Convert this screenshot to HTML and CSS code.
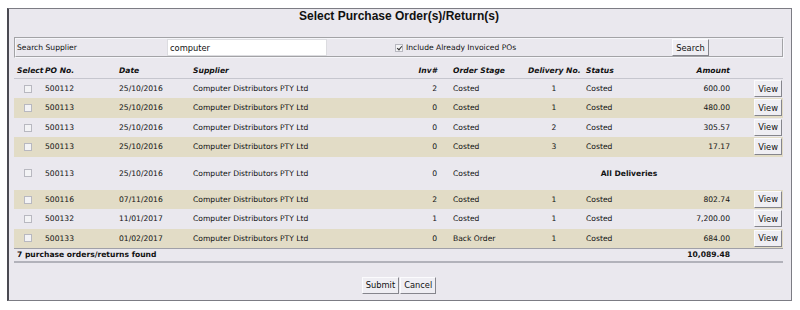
FILE: index.html
```html
<!DOCTYPE html>
<html>
<head>
  <title>Select Purchase Order(s)/Return(s)</title>
  <meta charset="UTF-8">
  <link rel="stylesheet" href="styles.css">
</head>
<body>
  <div class="frame">
    <h1 class="title">Select Purchase Order(s)/Return(s)</h1>

    <!-- Pasek wyszukiwania dostawcy -->
    <form class="search-bar" id="search-form">
      <label class="search-label" for="supplier">Search Supplier</label>
      <div><input type="text" id="supplier" class="search-input" value="computer"></div>
      <label class="include"><input type="checkbox" class="check" checked> Include Already Invoiced POs</label>
      <button type="submit" class="btn">Search</button>
    </form>

    <table class="po-table">
      <colgroup>
        <col class="c-select">
        <col class="c-po">
        <col class="c-date">
        <col class="c-supplier">
        <col class="c-inv">
        <col class="c-stage">
        <col class="c-delivery">
        <col class="c-status">
        <col class="c-amount">
        <col class="c-view">
      </colgroup>
      <thead>
        <tr>
          <th>Select</th>
          <th>PO No.</th>
          <th>Date</th>
          <th>Supplier</th>
          <th class="num inv">Inv#</th>
          <th>Order Stage</th>
          <th>Delivery No.</th>
          <th>Status</th>
          <th class="num">Amount</th>
          <th></th>
        </tr>
      </thead>
      <tbody>
        <tr>
          <td class="center"><input type="checkbox" class="check"></td>
          <td>500112</td><td>25/10/2016</td><td>Computer Distributors PTY Ltd</td>
          <td class="num inv">2</td><td>Costed</td><td class="center">1</td><td>Costed</td>
          <td class="num">600.00</td><td class="view"><button class="btn">View</button></td>
        </tr>
        <tr>
          <td class="center"><input type="checkbox" class="check"></td>
          <td>500113</td><td>25/10/2016</td><td>Computer Distributors PTY Ltd</td>
          <td class="num inv">0</td><td>Costed</td><td class="center">1</td><td>Costed</td>
          <td class="num">480.00</td><td class="view"><button class="btn">View</button></td>
        </tr>
        <tr>
          <td class="center"><input type="checkbox" class="check"></td>
          <td>500113</td><td>25/10/2016</td><td>Computer Distributors PTY Ltd</td>
          <td class="num inv">0</td><td>Costed</td><td class="center">2</td><td>Costed</td>
          <td class="num">305.57</td><td class="view"><button class="btn">View</button></td>
        </tr>
        <tr>
          <td class="center"><input type="checkbox" class="check"></td>
          <td>500113</td><td>25/10/2016</td><td>Computer Distributors PTY Ltd</td>
          <td class="num inv">0</td><td>Costed</td><td class="center">3</td><td>Costed</td>
          <td class="num">17.17</td><td class="view"><button class="btn">View</button></td>
        </tr>
        <tr class="tall">
          <td class="center"><input type="checkbox" class="check"></td>
          <td>500113</td><td>25/10/2016</td><td>Computer Distributors PTY Ltd</td>
          <td class="num inv">0</td><td>Costed</td>
          <td colspan="3" class="center all">All Deliveries</td>
          <td></td>
        </tr>
        <tr>
          <td class="center"><input type="checkbox" class="check"></td>
          <td>500116</td><td>07/11/2016</td><td>Computer Distributors PTY Ltd</td>
          <td class="num inv">2</td><td>Costed</td><td class="center">1</td><td>Costed</td>
          <td class="num">802.74</td><td class="view"><button class="btn">View</button></td>
        </tr>
        <tr>
          <td class="center"><input type="checkbox" class="check"></td>
          <td>500132</td><td>11/01/2017</td><td>Computer Distributors PTY Ltd</td>
          <td class="num inv">1</td><td>Costed</td><td class="center">1</td><td>Costed</td>
          <td class="num">7,200.00</td><td class="view"><button class="btn">View</button></td>
        </tr>
        <tr>
          <td class="center"><input type="checkbox" class="check"></td>
          <td>500133</td><td>01/02/2017</td><td>Computer Distributors PTY Ltd</td>
          <td class="num inv">0</td><td>Back Order</td><td class="center">1</td><td>Costed</td>
          <td class="num">684.00</td><td class="view"><button class="btn">View</button></td>
        </tr>
      </tbody>
      <tfoot>
        <tr>
          <td colspan="8">7 purchase orders/returns found</td>
          <td class="num">10,089.48</td>
          <td></td>
        </tr>
      </tfoot>
    </table>

    <div class="actions">
      <button class="btn" id="submit-button">Submit</button>
      <button class="btn" id="cancel-button">Cancel</button>
    </div>
  </div>
</body>
</html>
```

FILE: styles.css
```css
body {
  margin: 0;
  background-color: #fff;
  font-family: "DejaVu Sans", Verdana, sans-serif;
  font-size: 7.6px;
  color: #111;
}

/* Ramka całego okna */
.frame {
  margin: 8px 8px 0 7px;
  height: 293px;
  box-sizing: border-box;
  padding: 0 7px 0 5px;
  background-color: #eae8ee;
  border: 1px solid #7c7c84;
  border-left: 2px solid #4a4a52;
}

.title {
  margin: 0;
  height: 28px;
  line-height: 26px;
  text-align: center;
  font: bold 12px "Liberation Sans", Arial, sans-serif;
}

/* Pasek wyszukiwania */
.search-bar {
  display: grid;
  grid-template-columns: 151px 228px 277px 37px;
  align-items: center;
  height: 21px;
  box-sizing: border-box;
  margin: 0;
  border: 2px groove #f6f6fa;
}

.search-label {
  padding-left: 1px;
}

.search-input {
  display: block;
  width: 160px;
  height: 17px;
  box-sizing: border-box;
  padding: 0 2px;
  border: 1px solid #dcdce0;
  background: #fff;
  font-family: inherit;
  font-size: 8.3px;
  color: #111;
  outline: none;
}

.include {
  display: flex;
  align-items: center;
  gap: 3px;
}

/* Małe pola wyboru */
.check {
  appearance: none;
  -webkit-appearance: none;
  position: relative;
  width: 8px;
  height: 8px;
  margin: 0;
  border: 1px solid #b8b8c0;
  background-color: #f3f3f5;
  vertical-align: middle;
}

.check:checked::before {
  content: "";
  position: absolute;
  left: 2px;
  top: 0;
  width: 2px;
  height: 4px;
  border: solid #333;
  border-width: 0 1px 1px 0;
  transform: rotate(40deg);
}

/* Przyciski */
.btn {
  height: 17px;
  padding: 0 3px;
  background-color: #efeef3;
  border: 1px solid;
  border-color: #fbfbfd #85858c #85858c #fbfbfd;
  font-family: inherit;
  font-size: 8.3px;
  color: #111;
  cursor: pointer;
}

/* Tabela zamówień */
.po-table {
  width: 769px;
  margin-top: 4px;
  border-collapse: collapse;
  table-layout: fixed;
}

.c-select { width: 28px; }
.c-po { width: 74px; }
.c-date { width: 74px; }
.c-supplier { width: 220px; }
.c-inv { width: 40px; }
.c-stage { width: 75px; }
.c-delivery { width: 58px; }
.c-status { width: 67px; }
.c-amount { width: 83px; }
.c-view { width: 50px; }

.po-table th {
  height: 16px;
  padding: 0 3px;
  text-align: left;
  font-weight: bold;
  font-style: italic;
  white-space: nowrap;
  border-bottom: 1px solid #c6c6ce;
}

.po-table td {
  padding: 0 3px;
  white-space: nowrap;
}

.po-table tbody tr {
  height: 19.5px;
}

.po-table tbody tr:nth-child(even) {
  background-color: #e2dcc6;
}

.po-table tbody tr.tall {
  height: 33px;
}

.po-table .num {
  text-align: right;
}

.po-table .inv {
  padding-right: 13px;
}

.po-table .center {
  text-align: center;
}

.po-table .all {
  font-weight: bold;
}

.po-table .view {
  text-align: right;
  padding-right: 1px;
}

.po-table tfoot td {
  height: 12px;
  font-weight: bold;
  border-top: 1px solid #a0a0a8;
  border-bottom: 2px solid #b2b2ba;
}

.actions {
  display: flex;
  justify-content: center;
  gap: 1px;
  margin-top: 14px;
}
```
